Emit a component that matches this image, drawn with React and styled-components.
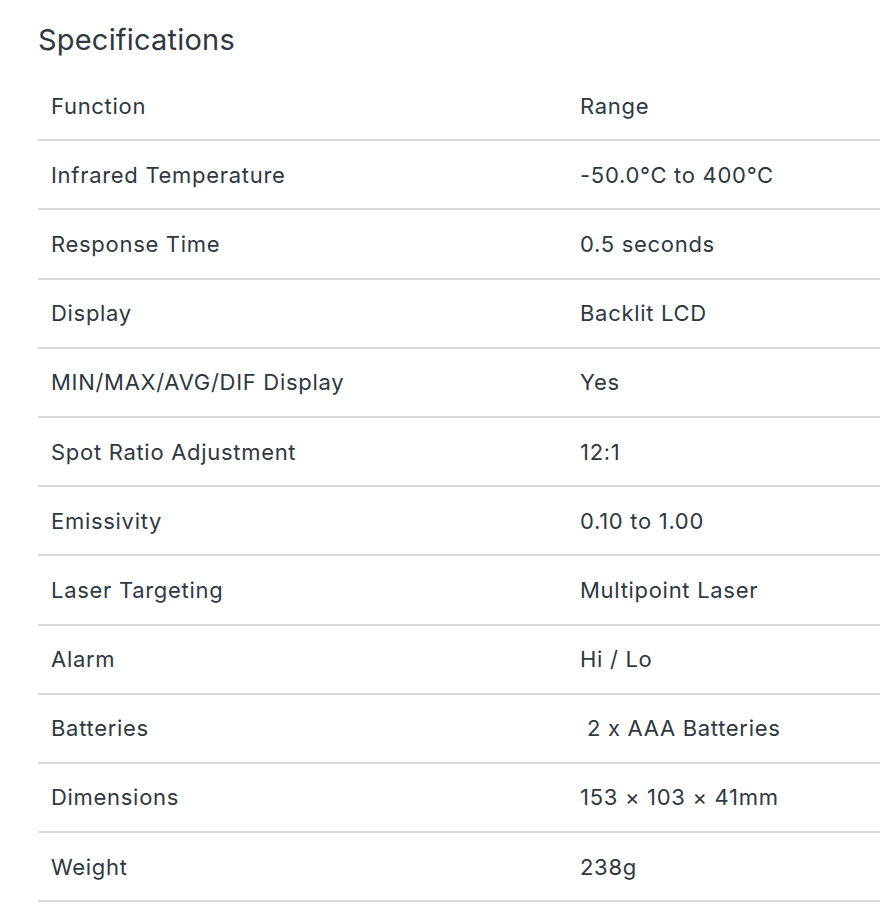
import React from 'react';
import styled, { createGlobalStyle } from 'styled-components';

const GlobalStyle = createGlobalStyle`
  body {
    margin: 0;
    background: #ffffff;
    font-family: Inter, "Noto Sans", sans-serif;
    color: #2e3842;
  }
`;

const Section = styled.section`
  padding: 20px 0 0 38px;
`;

const Title = styled.h2`
  margin: 0;
  font-size: 29px;
  font-weight: 400;
  line-height: 40px;
  letter-spacing: 0.2px;
  color: #2e3842;
`;

const SpecTable = styled.table`
  width: 100%;
  margin-top: 12px;
  border-collapse: collapse;
  table-layout: fixed;
`;

const Cell = styled.td`
  height: 67.2px;
  padding: 0 13px;
  font-size: 22px;
  font-weight: 400;
  letter-spacing: 0.7px;
  color: #2e3842;
  border-bottom: 2px solid #d9d9d9;
  vertical-align: middle;
  white-space: pre;
  width: ${(p) => (p.$first ? '503px' : 'auto')};
`;

const specs = [
  ['Function', 'Range'],
  ['Infrared Temperature', '-50.0°C to 400°C'],
  ['Response Time', '0.5 seconds'],
  ['Display', 'Backlit LCD'],
  ['MIN/MAX/AVG/DIF Display', 'Yes'],
  ['Spot Ratio Adjustment', '12:1'],
  ['Emissivity', '0.10 to 1.00'],
  ['Laser Targeting', 'Multipoint Laser'],
  ['Alarm', 'Hi / Lo'],
  ['Batteries', ' 2 x AAA Batteries'],
  ['Dimensions', '153 × 103 × 41mm'],
  ['Weight', '238g'],
];

export default function App() {
  return (
    <>
      <GlobalStyle />
      <Section>
        <Title>Specifications</Title>
        <SpecTable>
          <tbody>
            {specs.map(([name, value]) => (
              <tr key={name}>
                <Cell $first>{name}</Cell>
                <Cell>{value}</Cell>
              </tr>
            ))}
          </tbody>
        </SpecTable>
      </Section>
    </>
  );
}
